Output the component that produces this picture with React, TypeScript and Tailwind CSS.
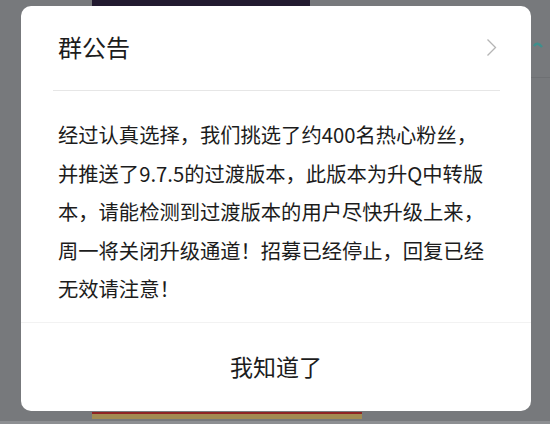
import React from 'react';

const lines = [
  '经过认真选择，我们挑选了约400名热心粉丝，',
  '并推送了9.7.5的过渡版本，此版本为升Q中转版',
  '本，请能检测到过渡版本的用户尽快升级上来，',
  '周一将关闭升级通道！招募已经停止，回复已经',
  '无效请注意！',
];

const App: React.FC = () => {
  return (
    <div className="w-[550px] h-[424px] overflow-hidden bg-[#77797c] flex flex-col font-['Noto_Sans_CJK_SC',sans-serif] text-[#1c1c1c]">
      {/* background content peeking above */}
      <div className="h-[6px] flex">
        <div className="ml-[92px] w-[218px] h-full bg-[#221a30]" />
      </div>

      <div className="flex">
        {/* Dialog */}
        <div className="ml-[21px] w-[510px] h-[405px] bg-white rounded-[10px] flex flex-col">
          <div className="h-[84px] pl-[37px] pr-[34px] pb-[2px] flex items-center justify-between">
            <span className="text-[24px] leading-none">群公告</span>
            <svg width="11" height="19" viewBox="0 0 11 19" fill="none">
              <polyline points="1.5,1.5 9.5,9.5 1.5,17.5" stroke="#b5b5b5" strokeWidth="1.3" />
            </svg>
          </div>
          <div className="ml-[32px] mr-[31px] h-px bg-[#e6e6e6]" />

          <div className="pl-[37px] pt-[24px] pb-[14px] text-[20.3px] leading-[38.5px] whitespace-nowrap">
            {lines.map((l) => (
              <div key={l}>{l}</div>
            ))}
          </div>

          <div className="h-px bg-[#f2f2f2]" />
          <button className="flex-1 flex items-center justify-center pb-[2px] text-[23px] text-[#1c1c1c]">
            我知道了
          </button>
        </div>

        {/* background content on the right */}
        <div className="flex-1 flex flex-col">
          <svg width="12" height="12" viewBox="0 0 12 12" className="mt-[34px] ml-[2px]">
            <path d="M1 6 Q4 1 9 7" stroke="#3f8f8c" strokeWidth="2.5" fill="none" />
          </svg>
          <div className="mt-[25px] h-px bg-[#6e7073]" />
        </div>
      </div>

      {/* background content peeking below */}
      <div className="flex-1 flex flex-col pt-[1px]">
        <div className="ml-[92px] w-[270px] h-[7px] flex flex-col">
          <div className="h-[2px] bg-[#8f2424]" />
          <div className="flex-1 bg-[#a28b52]" />
        </div>
        <div className="mt-auto h-[3px] bg-[#8d8f92]" />
      </div>
    </div>
  );
};

export default App;
